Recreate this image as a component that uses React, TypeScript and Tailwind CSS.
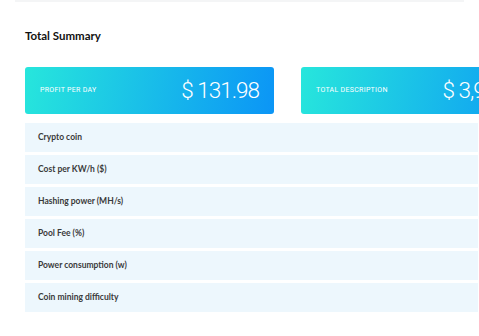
const rows = [
  'Crypto coin',
  'Cost per KW/h ($)',
  'Hashing power (MH/s)',
  'Pool Fee (%)',
  'Power consumption (w)',
  'Coin mining difficulty',
];

const cards = [
  { label: 'PROFIT PER DAY', value: '$ 131.98' },
  { label: 'TOTAL DESCRIPTION', value: '$ 3,948.40' },
];

export default function App() {
  return (
    <div className="w-[479px] h-[336px] overflow-hidden bg-white font-['Lato',sans-serif]">
      <div className="mx-[15px] h-[2px] bg-[#f4f5f6]" />
      <div className="pl-[25px]">
        <h2 className="mt-[26px] text-[11.5px] font-bold leading-[16px] text-[#111]">Total Summary</h2>

        <div className="mt-[23px] flex gap-[27px] w-[600px]">
          {cards.map((c) => (
            <div
              key={c.label}
              className="flex h-[47px] w-[249px] shrink-0 items-center justify-between rounded-[3px] bg-[linear-gradient(100deg,#27e6dc,#0b95f6)] pl-[15px] pr-[15px] text-white"
            >
              <span className="text-[7px] tracking-[0.3px] font-['Roboto',sans-serif]">{c.label}</span>
              <span className="text-[22.5px] font-light leading-none tracking-[-1px] font-['Roboto',sans-serif]">{c.value}</span>
            </div>
          ))}
        </div>

        <div className="mt-[9px] flex w-[453px] flex-col gap-[3px]">
          {rows.map((r) => (
            <div key={r} className="flex h-[29px] items-center bg-[#edf7fd] pl-[13px]">
              <span className="text-[8.5px] font-bold text-[#3a3a3a]">{r}</span>
            </div>
          ))}
        </div>
      </div>
    </div>
  );
}
